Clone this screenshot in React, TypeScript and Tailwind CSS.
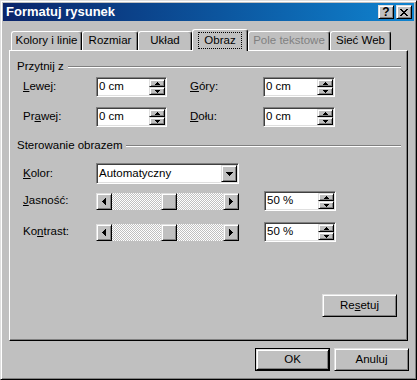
import React from "react";

const raised =
  "bg-[#c0c0c0] border border-t-[#dfdfdf] border-l-[#dfdfdf] border-r-black border-b-black shadow-[inset_1px_1px_#fff,inset_-1px_-1px_#808080]";
const sunken =
  "bg-white border border-t-[#808080] border-l-[#808080] border-r-white border-b-white shadow-[inset_1px_1px_#404040,inset_-1px_-1px_#dfdfdf]";

function Tri({ dir, size = "sm" }: { dir: "up" | "down" | "left" | "right"; size?: "sm" | "md" }) {
  if (dir === "up" || dir === "down") {
    const w = size === "sm" ? 5 : 7;
    const h = size === "sm" ? 3 : 4;
    const d = dir === "up" ? `M${w / 2} 0 L${w} ${h} L0 ${h} Z` : `M0 0 L${w} 0 L${w / 2} ${h} Z`;
    return (
      <svg width={w} height={h} viewBox={`0 0 ${w} ${h}`} shapeRendering="crispEdges">
        <path d={d} fill="#000" />
      </svg>
    );
  }
  const d = dir === "left" ? "M0 3.5 L4 0 L4 7 Z" : "M0 0 L4 3.5 L0 7 Z";
  return (
    <svg width={4} height={7} viewBox="0 0 4 7" shapeRendering="crispEdges">
      <path d={d} fill="#000" />
    </svg>
  );
}

function Spinner({ value, w = "w-[71px]" }: { value: string; w?: string }) {
  return (
    <div className={`${sunken} flex h-[20px] ${w} items-stretch p-[1px]`}>
      <span className="flex flex-1 items-center pl-[1px]">{value}</span>
      <div className="flex flex-col">
        <div className={`${raised} flex h-[8px] w-[16px] items-center justify-center`}>
          <Tri dir="up" />
        </div>
        <div className={`${raised} flex h-[8px] w-[16px] items-center justify-center`}>
          <Tri dir="down" />
        </div>
      </div>
    </div>
  );
}

function Slider() {
  return (
    <div className="flex h-[17px] w-[143px]">
      <div className={`${raised} flex w-[16px] items-center justify-center`}>
        <Tri dir="left" />
      </div>
      <div className="flex flex-1 bg-[repeating-conic-gradient(#fff_0_25%,#c0c0c0_0_50%)] bg-[length:2px_2px]">
        <div className={`${raised} ml-[49px] w-[16px]`} />
      </div>
      <div className={`${raised} flex w-[16px] items-center justify-center`}>
        <Tri dir="right" />
      </div>
    </div>
  );
}

function Label({ pre, ul, post, w = "w-[73px]" }: { pre: string; ul: string; post: string; w?: string }) {
  return (
    <span className={`${w} shrink-0`}>
      {pre}
      <u className="underline-offset-[1px]">{ul}</u>
      {post}
    </span>
  );
}

function GroupHeader({ title }: { title: string }) {
  return (
    <div className="flex h-[14px] items-center">
      <span>{title}</span>
      <div className="ml-[4px] h-[2px] flex-1 border-t border-b border-t-[#808080] border-b-white" />
    </div>
  );
}

const tabs = [
  { name: "Kolory i linie", w: "w-[71px]" },
  { name: "Rozmiar", w: "w-[56px]" },
  { name: "Układ", w: "w-[54px]" },
  { name: "Obraz", w: "w-[56px]", active: true },
  { name: "Pole tekstowe", w: "w-[82px]", disabled: true },
  { name: "Sieć Web", w: "w-[61px]" },
];

export default function App() {
  return (
    <div className="h-[380px] w-[417px] bg-[#c0c0c0] font-['Liberation_Sans',Arial,sans-serif] text-[11.5px] text-black">
      <div className="flex h-full w-full flex-col border border-t-[#dfdfdf] border-l-[#dfdfdf] border-r-black border-b-black p-[2px] shadow-[inset_1px_1px_#fff,inset_-1px_-1px_#808080]">
        {/* pasek tytułu */}
        <div className="flex h-[18px] shrink-0 items-center bg-gradient-to-r from-[#0a246a] to-[#1084d0] pl-[3px] pr-[2px]">
          <span className="flex-1 text-[13px] font-bold text-white">Formatuj rysunek</span>
          <div className={`${raised} flex h-[14px] w-[16px] items-center justify-center text-[12px] font-bold leading-none`}>?</div>
          <div className={`${raised} ml-[2px] flex h-[14px] w-[16px] items-center justify-center`}>
            <svg width="8" height="7" viewBox="0 0 8 7" shapeRendering="crispEdges">
              <path d="M0 0 L2 0 L4 2.5 L6 0 L8 0 L5 3.5 L8 7 L6 7 L4 4.5 L2 7 L0 7 L3 3.5 Z" fill="#000" />
            </svg>
          </div>
        </div>

        {/* zakładki */}
        <div className="mt-[8px] flex h-[21px] shrink-0 items-end pl-[8px]">
          {tabs.map((t) =>
            t.active ? (
              <div
                key={t.name}
                className={`relative z-10 -mb-[1px] flex h-[22px] ${t.w} items-center justify-center rounded-t-[3px] border border-b-0 border-t-white border-l-white border-r-black bg-[#c0c0c0] shadow-[inset_-1px_0_#808080]`}
              >
                <span className="border border-dotted border-black px-[5px] py-[1px] leading-[13px]">{t.name}</span>
              </div>
            ) : (
              <div
                key={t.name}
                className={`flex h-[19px] ${t.w} items-center justify-center rounded-t-[3px] border border-b-0 border-t-white border-l-white border-r-black shadow-[inset_-1px_0_#808080] ${t.disabled ? "text-[#808080]" : ""}`}
              >
                {t.name}
              </div>
            )
          )}
        </div>

        {/* panel */}
        <div className="ml-[6px] flex h-[291px] w-[399px] shrink-0 flex-col border border-t-white border-l-white border-r-black border-b-black pl-[7px] pr-[6px] shadow-[inset_-1px_-1px_#808080]">
          <div className="mt-[9px]">
            <GroupHeader title="Przytnij z" />
          </div>
          <div className="mt-[3px] flex h-[20px] items-center pl-[6px]">
            <Label pre="" ul="L" post="ewej:" />
            <Spinner value="0 cm" />
            <span className="ml-[23px]" />
            <Label pre="" ul="G" post="óry:" />
            <Spinner value="0 cm" w="w-[72px]" />
          </div>
          <div className="mt-[10px] flex h-[20px] items-center pl-[6px]">
            <Label pre="Pr" ul="a" post="wej:" />
            <Spinner value="0 cm" />
            <span className="ml-[23px]" />
            <Label pre="" ul="D" post="ołu:" />
            <Spinner value="0 cm" w="w-[72px]" />
          </div>

          <div className="mt-[12px]">
            <GroupHeader title="Sterowanie obrazem" />
          </div>
          <div className="mt-[10px] flex h-[21px] items-center pl-[6px]">
            <Label pre="" ul="K" post="olor:" />
            <div className={`${sunken} flex h-[21px] w-[143px] items-stretch p-[1px]`}>
              <span className="flex flex-1 items-center pl-[1px]">Automatyczny</span>
              <div className={`${raised} flex w-[16px] items-center justify-center`}>
                <Tri dir="down" size="md" />
              </div>
            </div>
          </div>
          <div className="mt-[7px] flex h-[20px] items-center pl-[6px]">
            <Label pre="" ul="J" post="asność:" />
            <Slider />
            <span className="ml-[25px]" />
            <Spinner value="50 %" w="w-[72px]" />
          </div>
          <div className="mt-[11px] flex h-[20px] items-center pl-[6px]">
            <Label pre="Ko" ul="n" post="trast:" />
            <Slider />
            <span className="ml-[25px]" />
            <Spinner value="50 %" w="w-[72px]" />
          </div>

          <div className="mt-[52px] flex justify-end pr-[4px]">
            <button className={`${raised} h-[23px] w-[75px]`}>
              Re<u className="underline-offset-[1px]">s</u>etuj
            </button>
          </div>
        </div>

        {/* przyciski */}
        <div className="mt-[7px] flex justify-end gap-[4px] pr-[5px]">
          <button className="h-[23px] w-[75px] border border-black">
            <div className={`${raised} flex h-full w-full items-center justify-center`}>OK</div>
          </button>
          <button className={`${raised} h-[23px] w-[75px]`}>Anuluj</button>
        </div>
      </div>
    </div>
  );
}
